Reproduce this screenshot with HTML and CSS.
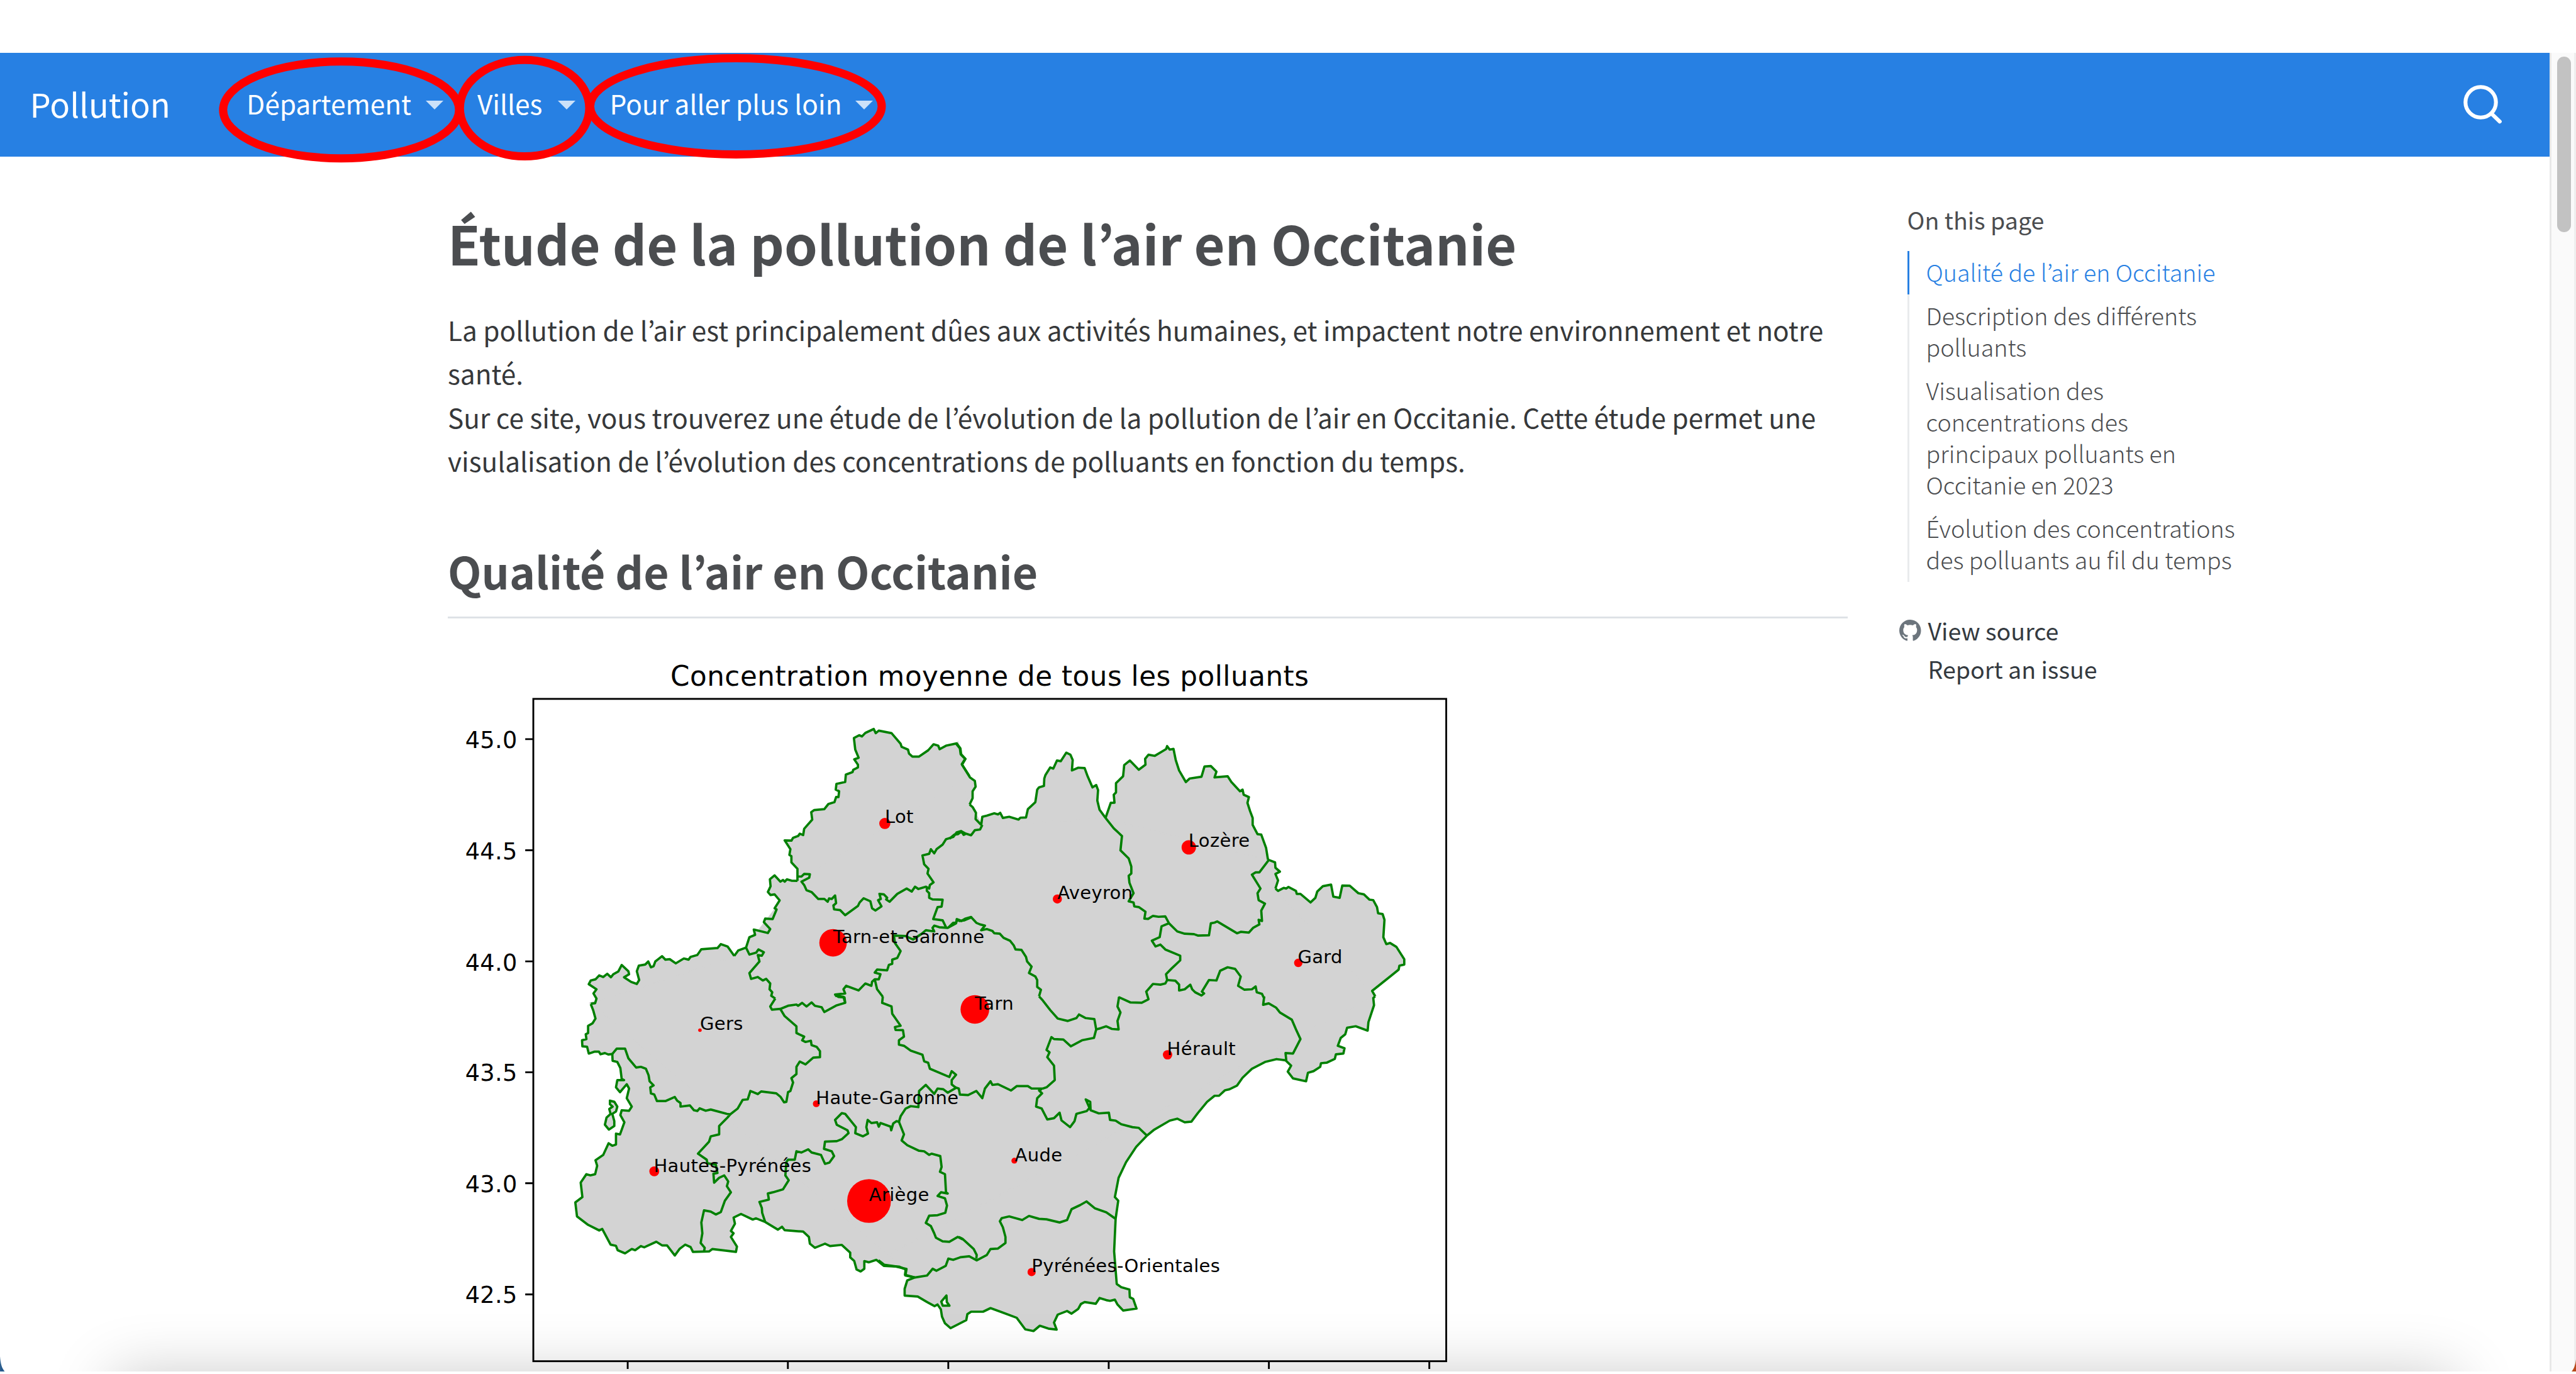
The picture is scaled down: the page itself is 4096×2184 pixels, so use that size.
FILE: index.html
```html
<!DOCTYPE html>
<html lang="fr">
<head>
<meta charset="utf-8">
<title>Pollution</title>
<link rel="stylesheet" href="styles.css">
</head>
<body>
<div class="window">
  <header class="navbar">
    <a class="brand">Pollution</a>
    <nav class="menu">
      <a class="menu-item dept">Département<i class="caret"></i></a>
      <a class="menu-item villes">Villes<i class="caret"></i></a>
      <a class="menu-item loin">Pour aller plus loin<i class="caret"></i></a>
    </nav>
    <svg class="search" viewBox="0 0 66 66"><circle cx="29.5" cy="29.5" r="26" fill="none" stroke="#fff" stroke-width="6.6"/><path d="M48 49 L62 62.5" stroke="#fff" stroke-width="6.6" stroke-linecap="round"/></svg>
  </header>
  <svg class="marks" viewBox="0 0 1600 300">
    <ellipse cx="582.6" cy="187.7" rx="201.5" ry="82.7"/>
    <ellipse cx="896" cy="184.7" rx="110.5" ry="82.3"/>
    <ellipse cx="1257" cy="181.5" rx="249" ry="82.2"/>
  </svg>
  <div class="page">
    <main class="content">
      <h1>Étude de la pollution de l’air en Occitanie</h1>
      <p>La pollution de l’air est principalement dûes aux activités humaines, et impactent notre environnement et notre<br>santé.<br>Sur ce site, vous trouverez une étude de l’évolution de la pollution de l’air en Occitanie. Cette étude permet une<br>visulalisation de l’évolution des concentrations de polluants en fonction du temps.</p>
      <h2>Qualité de l’air en Occitanie</h2>
      <svg class="map" viewBox="760 1100 1740 1246">
        <defs>
          <g id="coast">
            <g transform="translate(760 1100) scale(.574 .3954)">
              <path d="M433,1552 446,1550 450,1530 441,1508 450,1490 427,1468 433,1452 447,1447 458,1430 470,1437 482,1423 493,1438 500,1425 515,1413 525,1385 545,1412 547,1425 532,1438 553,1458 570,1467 577,1450 570,1412 576,1388 595,1383 604,1370 612,1395 620,1390 625,1370 645,1347 655,1362 668,1360 686,1378 710,1357 724,1362 730,1350 750,1342 762,1317 810,1312 820,1295 840,1305 860,1346"/>
              <path d="M895,1310 905,1265 922,1255 918,1232 960,1247 967,1230 948,1200 952,1185 974,1187 986,1145 980,1140 995,1106 980,1080 968,1083 960,1070 968,1045 966,1015 980,998 997,1025 1005,1018 1010,1025 1017,1015 1030,1021 1048,1022"/>
              <path d="M1048,1022 1048,1003 1048,970 1030,942 1030,915 1024,910 1027,885 1010,847 1030,848 1035,836 1050,828 1055,818 1065,824 1068,797 1092,757 1089,725 1098,716 1128,712 1140,690 1158,682 1163,660 1170,660 1172,635 1162,628 1164,603 1190,595 1192,563 1212,552 1214,542 1228,532 1228,520 1217,497 1230,490 1220,455 1216,405 1232,393 1240,398 1250,383 1275,366 1281,384 1290,373 1328,384 1355,430 1358,443 1377,455 1380,472 1390,485 1410,485 1437,458 1453,432 1467,438 1471,453 1490,438 1522,428 1533,450 1535,475 1548,495 1538,520 1560,570"/>
            </g>
            <g transform="translate(1500 1100) scale(.6378 .3954)">
              <path d="M207,428 218,450 220,475 232,495 223,518 245,575 258,590 260,615 252,635 252,665 244,692"/>
              <path d="M244,692 252,703 261,728 260,755 275,780"/>
              <path d="M275,780 278,745 290,740 310,730 320,735 326,728 333,750 350,745 375,757 380,749 395,748 400,712 420,682 425,628 430,618 443,612 444,580 447,565 460,532 468,537 478,502 488,505 503,468 514,477 520,500 518,545 535,533 552,535 560,570 573,618 583,608 588,630 586,675 592,715 608,750"/>
              <path d="M608,750 622,685 632,684 630,650 636,640 636,600 655,570 658,522 673,502 697,542 715,520 714,495 723,477 740,482 770,453 773,440 780,455 790,452 796,500 805,545 823,595 833,580 865,572 873,528 890,526 905,550 900,575 935,570 945,595 968,635 975,628 978,650 992,660 988,685 995,720 1002,750 1002,780 1015,820 1025,822 1038,880 1043,930"/>
              <path d="M1043,930 1062,942 1063,965 1075,982 1063,992 1070,1020 1063,1055"/>
              <path d="M1063,1055 1070,1065 1085,1052 1092,1055 1098,1048 1118,1065 1120,1078 1130,1078 1157,1115 1170,1095 1175,1068 1190,1045 1212,1038 1218,1090 1235,1095 1242,1042 1262,1043 1285,1075 1300,1080 1315,1103 1325,1105 1335,1135 1338,1162 1350,1165 1355,1190 1352,1265 1360,1295 1370,1290 1387,1307 1408,1360 1408,1383 1395,1388 1393,1405 1370,1435 1322,1497 1330,1520"/>
            </g>
            <g transform="translate(1500 1700) scale(.6378 .412)">
              <path d="M1330,3 1325,10 1327,40 1312,110 1310,145 1278,127 1255,133 1250,160 1238,175 1230,208 1248,218 1245,240 1225,243 1222,262 1200,278 1185,280 1183,295 1165,313 1150,320 1145,355 1110,343 1096,315 1105,290 1090,268 1066,263 1035,275 1000,303 975,340 960,373 940,388 928,392 912,415 900,415 880,440 855,487 838,522 820,525 800,510 780,518 737,557 719,580 690,627 663,690 643,755 633,835 642,850 635,925 631,1060 638,1195 650,1208 672,1218 673,1250 682,1257 691,1297 655,1305 640,1280 633,1260 620,1265 610,1262 592,1253 582,1277 552,1270 542,1278 535,1298 517,1318 505,1307 480,1322 470,1355 477,1384 455,1380 432,1368 415,1390 393,1383 370,1335 330,1312 300,1295 280,1310 248,1310 238,1320 235,1345 193,1378 178,1358 170,1330 167,1300 158,1280 150,1287 130,1270 105,1247 70,1243 70,1215 77,1180 97,1168 72,1160 75,1133 45,1122 15,1115 0,1097"/>
            </g>
            <g transform="translate(760 1700) scale(.574 .412)">
              <path d="M433,35 440,60 447,95 438,115 425,125 425,155 418,160 420,180 407,185 408,210 422,212 427,240 445,232 457,232 462,243 475,238 485,244 497,242 498,270 512,275 521,300 525,345 532,350 512,350 508,380 520,400 540,367 547,385 540,425 555,460 547,477 525,475 521,495 533,525 520,575 508,572 508,617 497,622 486,612 470,660 447,682 452,705 446,740 432,745 420,740 403,775 408,835 387,857 392,915 425,950 458,973 467,967 492,1032 508,1037 513,1055 535,1068 555,1050 565,1055 582,1038 592,1043 628,1020 645,1035 660,1035 683,1077 697,1050 714,1032 730,1042 737,1062 785,1060 795,1050 865,1062 868,1040 850,1000 858,985 850,975 862,945 858,920 880,905 915,928 925,923 952,938 990,970 1002,958 1010,972 1065,978 1082,1000 1085,1028 1100,1045 1130,1028 1145,1038 1180,1033 1205,1065 1205,1085 1217,1100 1224,1135 1236,1143 1247,1132 1247,1100 1260,1105 1283,1095 1305,1120 1350,1123 1370,1135 1368,1157 1397,1168"/>
            </g>
          </g>
        </defs>
        <g class="land">
          <path class="inland" d="M1009,1713 1253.6,1632.2 1273.7,1618 1361.6,1504 1635,1269 1655.6,1373.6 1675.4,1408.4 1887.8,1396.6 2165.2,1467.7 2178,1517 2348,1700 1500,2152z"/>
          <use href="#coast"/>
        </g>
        <g class="border">
          <use href="#coast"/>
          <g transform="translate(760 1100) scale(.574 .3954)">
            <path d="M860,1346 872,1322 895,1310"/>
            <path d="M1048,1003 1060,1003 1068,992 1085,993 1083,1008 1060,1025 1068,1040 1075,1062 1090,1070 1110,1100 1128,1100 1138,1112 1142,1098 1150,1100 1160,1085 1163,1118 1155,1128 1157,1145 1175,1148 1190,1170 1228,1130 1233,1115 1245,1097 1265,1110 1270,1140 1280,1150 1298,1132 1288,1105 1296,1100 1292,1078 1305,1080 1315,1095 1312,1102 1322,1112 1345,1078 1373,1055 1388,1068 1398,1047 1408,1057 1430,1047 1440,1055 1442,1040 1453,1028 1435,990 1438,970 1425,950 1420,912 1440,905 1445,885 1455,903 1462,885 1480,865 1490,842 1512,832 1522,812 1535,807 1548,817"/>
            <path d="M1433,1047 1433,1065 1440,1075 1440,1095 1450,1102 1480,1103 1477,1133 1465,1135 1452,1187 1480,1192 1490,1222"/>
            <path d="M1568,1178 1545,1192 1530,1195 1522,1187 1520,1205 1495,1225 1470,1222 1455,1215 1450,1225 1455,1240 1430,1235 1418,1250 1392,1275 1370,1260 1335,1258 1338,1290 1355,1325 1345,1355 1330,1362 1330,1380 1320,1385 1315,1408 1285,1405 1278,1418 1295,1425 1290,1447 1278,1447 1270,1458 1268,1475 1250,1465 1230,1495 1193,1475 1185,1490 1190,1508 1160,1513 1170,1523 1188,1525 1190,1548"/>
            <path d="M895,1310 905,1340 925,1332 932,1318 948,1330 942,1345 930,1342 935,1370 905,1420 910,1445 930,1437 945,1452 955,1445 967,1465 965,1490 973,1503 970,1518 982,1530"/>
            <path d="M1278,1447 1285,1490 1302,1522"/>
          </g>
          <g transform="translate(1500 1100) scale(.6378 .3954)">
            <path d="M190,840 203,822 213,820 222,808 228,823 235,818 248,825 258,803 272,800 278,780"/>
            <path d="M188,1222 200,1203 207,1203 212,1188 222,1195 232,1185 248,1178 262,1203 272,1210 285,1215 275,1235 290,1230 305,1238 310,1248 325,1250 335,1268 352,1280 362,1300 367,1318 383,1320 395,1350 398,1370 410,1392 403,1420 420,1435 425,1450 425,1480 435,1492 430,1520"/>
            <path d="M642,1528 645,1525 675,1547 705,1548 723,1533 717,1500 735,1467 755,1470 768,1465 773,1450 795,1453 805,1470 805,1495 820,1490 835,1470 840,1490 848,1503 865,1517 872,1508 866,1500 885,1450 905,1452 915,1410 935,1395 955,1402 970,1435 963,1475 980,1492 1000,1490 1010,1478 1013,1503 1027,1510 1033,1530"/>
            <path d="M773,1450 770,1425 785,1400 808,1365 808,1345 768,1318 755,1297 742,1305 732,1280 753,1265 758,1218 778,1205"/>
            <path d="M608,750 630,795 652,828 648,890 670,925 677,960 677,990 670,1000 672,1030 683,1075 670,1110 683,1115 685,1132 697,1135 715,1155 712,1185 722,1186 735,1173 750,1177 768,1175 778,1205 800,1240 820,1250 845,1252 855,1258 885,1257 890,1205 900,1202 907,1197 960,1248 970,1242 992,1245 1003,1225 1020,1210 1018,1190 1027,1195 1025,1150 1035,1120 1018,1105 1015,1075 1023,1055 1000,995 1010,985 1020,985 1045,932"/>
          </g>
          <g transform="translate(760 1700) scale(.574 .412)">
            <path d="M1160,0 1185,5 1190,30 1165,40 1128,68 1120,48 1100,42 1090,28 1075,45 1062,30 1050,42 1045,37 1020,42 997,55 972,58 967,45 982,12"/>
            <path d="M1302,4 1300,30 1328,45 1330,75 1340,95 1355,125 1338,130 1340,142 1362,143 1365,170 1350,185 1350,203 1365,208 1385,228 1420,245 1425,272 1437,278 1442,303 1500,337 1507,313 1520,328 1507,350 1507,368 1520,382"/>
            <path d="M997,55 1010,85 1045,127 1045,155 1068,170 1062,185 1072,192 1088,187 1090,205 1105,212 1115,230 1115,255 1095,257 1072,285 1055,273 1045,295 1045,325 1030,342 1035,360 1027,395 1020,400 1015,440 1008,442 998,420 985,405 940,397 930,408 908,395 900,430 885,432 870,468 848,492"/>
            <path d="M497,242 510,220 535,220 545,260 568,298 582,295 597,303 605,330 608,355 620,372 610,380 612,405 622,410 630,437 655,437 683,420 690,435 700,445 700,460 728,455 740,475 750,478 757,467 775,477 790,472 838,490 848,492 840,505 815,540 815,575 790,583 785,605 752,655 778,680 780,695 805,700 810,735 798,738 800,775 815,755 830,745 842,770 838,790 850,815 832,850 820,897 805,907 790,895 770,890 762,940 765,985 760,1025 772,1045 770,1060"/>
            <path d="M952,938 943,900 942,880 935,855 963,845 960,820 975,815 1005,803 1022,765 1012,745 1015,690 1020,680 1040,680 1045,645 1060,650 1080,637 1090,650 1118,660 1130,697 1143,692 1157,665 1150,645 1127,635 1130,605 1165,603 1180,595 1200,570 1197,558 1165,535 1160,515 1180,487 1190,490 1222,545 1220,570 1243,583 1258,572 1253,545 1257,515 1268,528 1285,525 1290,543 1295,528 1325,543 1327,558 1333,530 1343,520 1350,523 1355,500 1370,468 1385,458 1408,462 1410,395 1430,370 1455,407 1465,385 1482,388 1495,402 1520,382"/>
            <path d="M1350,523 1365,575 1358,600 1375,620 1410,643 1425,645 1440,660 1447,655 1473,665 1477,710 1472,730 1487,740 1490,815 1495,820 1475,815 1465,830 1487,840 1493,870 1488,900 1465,910 1440,912 1430,942 1445,955 1455,985 1460,1003 1480,1018 1500,1020 1525,1000 1540,1010"/>
            <path class="islet" d="M490,435 503,440 512,460 508,480 497,490 503,520 503,540 487,555 475,535 480,505 492,490 488,470 498,460 490,450z"/>
          </g>
          <g transform="translate(1500 1700) scale(.6378 .412)">
            <path d="M215,1000 225,1008 255,1050 263,1075 262,1090"/>
            <path d="M97,1168 130,1160 145,1132 155,1140 180,1120 187,1090 200,1095 220,1084 243,1080 263,1097 290,1075 300,1050 320,1048 340,1025 340,1000 333,960 325,935 330,922 350,915 385,930 403,913 430,925 450,927 485,940 505,930 517,885 540,868 557,853 580,882 610,898 635,925"/>
            <path class="lake" d="M182,1243 183,1270 190,1285 172,1285 168,1268z"/>
            <path d="M205,380 215,385 218,410 240,412 262,395 278,425 285,385 300,355 305,370 320,367 355,393 370,375 400,375 410,385 440,385 450,380 472,350 470,290 452,255 458,235 450,225 463,172 470,180 495,182 515,210 545,185 577,175 583,140 578,97 555,93 537,78 530,93 507,105 480,95 460,60 440,20 430,3"/>
            <path d="M437,387 430,393 438,405 425,425 422,460 437,468 452,513 470,508 485,485 490,517 513,545 525,520 530,490 558,478 565,465 555,430 567,440 568,475 590,488 617,485 620,515 635,518 650,533 680,545 697,548 719,580"/>
            <path d="M583,140 595,135 610,127 625,138 643,140 640,105 648,70 640,45 644,8"/>
            <path d="M1033,3 1030,38 1045,32 1065,50 1075,70 1107,100 1118,140 1130,180 1110,240 1090,238 1092,268"/>
          </g>
        </g>
        <g class="dots">
          <circle cx="1510.8" cy="1406" r="9.5"/><circle cx="1422.4" cy="1609.7" r="23.5"/><circle cx="1483.8" cy="2050.6" r="37.4"/>
          <circle cx="1117" cy="2000" r="8.5"/><circle cx="1195" cy="1759" r="3"/><circle cx="1393.7" cy="1884.6" r="5.8"/>
          <circle cx="1664.6" cy="1723.5" r="24.5"/><circle cx="1993.7" cy="1801" r="8"/><circle cx="1732" cy="1981.8" r="5"/>
          <circle cx="1761.5" cy="2172" r="7"/><circle cx="1805.5" cy="1535" r="7.8"/><circle cx="2030" cy="1446.8" r="12.3"/><circle cx="2217" cy="1644" r="7.2"/>
        </g>
        <g class="labels">
          <text x="1510.8" y="1405">Lot</text><text x="1422.4" y="1610">Tarn-et-Garonne</text><text x="1483.8" y="2051">Ariège</text>
          <text x="1116" y="2001">Hautes-Pyrénées</text><text x="1195" y="1758">Gers</text><text x="1393" y="1885">Haute-Garonne</text>
          <text x="1664.6" y="1724">Tarn</text><text x="1992.7" y="1801.5">Hérault</text><text x="1732.7" y="1982.5">Aude</text>
          <text x="1761.5" y="2172">Pyrénées-Orientales</text><text x="1805.5" y="1535.5">Aveyron</text><text x="2029.5" y="1446">Lozère</text><text x="2216" y="1644.5">Gard</text>
        </g>
        <g class="axes">
          <rect x="910.4" y="1193.3" width="1559.3" height="1130.9"/>
          <path d="M896.6,1262H910M896.6,1451.7H910M896.6,1641.5H910M896.6,1830.8H910M896.6,2020.3H910M896.6,2210.2H910M1071.6,2324V2337.5M1345.2,2324V2337.5M1619.2,2324V2337.5M1893.2,2324V2337.5M2166.8,2324V2337.5M2440.8,2324V2337.5"/>
        </g>
        <g class="ticks">
          <text x="883" y="1277">45.0</text><text x="883" y="1467">44.5</text><text x="883" y="1657">44.0</text>
          <text x="883" y="1846">43.5</text><text x="883" y="2036">43.0</text><text x="883" y="2225">42.5</text>
        </g>
        <text class="plot-title" x="1690" y="1170.8">Concentration moyenne de tous les polluants</text>
      </svg>
    </main>
    <aside class="toc">
      <div class="toc-title">On this page</div>
      <ul>
        <li class="active">Qualité de l’air en Occitanie</li>
        <li>Description des différents<br>polluants</li>
        <li>Visualisation des<br>concentrations des<br>principaux polluants en<br>Occitanie en 2023</li>
        <li>Évolution des concentrations<br>des polluants au fil du temps</li>
      </ul>
      <div class="actions">
        <a><svg class="gh" viewBox="0 0 16 16"><path d="M8 0C3.58 0 0 3.58 0 8c0 3.54 2.29 6.53 5.47 7.59.4.07.55-.17.55-.38 0-.19-.01-.82-.01-1.49-2.01.37-2.53-.49-2.69-.94-.09-.23-.48-.94-.82-1.13-.28-.15-.68-.52-.01-.53.63-.01 1.08.58 1.23.82.72 1.21 1.87.87 2.33.66.07-.52.28-.87.51-1.07-1.78-.2-3.64-.89-3.64-3.95 0-.87.31-1.59.82-2.15-.08-.2-.36-1.02.08-2.12 0 0 .67-.21 2.2.82.64-.18 1.32-.27 2-.27s1.36.09 2 .27c1.53-1.04 2.2-.82 2.2-.82.44 1.1.16 1.92.08 2.12.51.56.82 1.27.82 2.15 0 3.07-1.87 3.75-3.65 3.95.29.25.54.73.54 1.48 0 1.07-.01 1.93-.01 2.2 0 .21.15.46.55.38A8.01 8.01 0 0 0 16 8c0-4.42-3.58-8-8-8"/></svg>View source</a>
        <a>Report an issue</a>
      </div>
    </aside>
  </div>
  <div class="scrollbar"><div class="thumb"></div></div>
  <div class="shade"><div class="dock"></div></div>
  <svg class="corner left" viewBox="0 0 8 26"><path d="M0 0C1 13 3 20 8 26H0z" fill="#265a8c"/></svg>
  <svg class="corner right" viewBox="0 0 8 26"><path d="M8 0C7 13 5 20 0 26H8z" fill="#b8491b"/></svg>
  <div class="edge"></div>
</div>
</body>
</html>
```
FILE: styles.css
```css
* { box-sizing: border-box; }
body { margin: 0; background: #fff; font-family: "Noto Sans CJK KR", "Noto Sans", sans-serif; color: #343a40; }
.window { position: relative; width: 4096px; height: 2184px; padding-top: 84px; overflow: hidden; }

.navbar { display: flex; align-items: center; width: 4054px; height: 165.4px; padding: 0 76px 5.5px 47.5px; background: #2780e3; color: #fff; white-space: nowrap; }
.brand { width: 344.5px; font-size: 52.5px; }
.menu { display: flex; flex: 1; font-size: 42.4px; }
.menu-item { display: flex; align-items: center; justify-content: space-between; }
.dept { width: 312.5px; margin-right: 54.5px; }
.villes { width: 155.5px; margin-right: 55px; }
.loin { width: 418px; }
.caret { border: 14px solid transparent; border-top-color: #cce1f9; border-bottom: 0; margin-top: 7px; }
.search { width: 61.5px; height: 61.5px; margin-top: 4px; }
.marks { position: absolute; left: 0; top: 0; width: 1489.5px; height: 279.3px; fill: none; stroke: #f00; stroke-width: 14; }

.page { display: flex; padding-left: 712px; }
.content { width: 2226px; padding-top: 85.8px; white-space: nowrap; }
h1 { margin: 0; font-size: 84.6px; line-height: 100px; color: #4b4d50; }
p { margin: 53.6px 0 96.9px; font-size: 42.35px; line-height: 69.5px; color: #36383a; }
h2 { margin: 0; padding-bottom: 30px; border-bottom: 3px solid #dee2e6; font-size: 69.6px; line-height: 86px; color: #4b4d50; }
.map { display: block; width: 1619.8px; height: 1160px; margin: 41.3px 0 0 -4.5px; font-family: "DejaVu Sans", sans-serif; }
.land { fill: #d3d3d3; }
.inland { stroke: #d3d3d3; stroke-width: 4; }
.border { fill: none; stroke: #008000; stroke-linejoin: round; }
.border path, #coast path { vector-effect: non-scaling-stroke; stroke-width: 3.7px; }
.border .islet { fill: #d3d3d3; }
.border .lake { fill: #fafafa; }
.dots { fill: #f00; }
.labels { font-size: 31.2px; letter-spacing: .35px; }
.axes { fill: none; stroke: #000; stroke-width: 3.1; }
.ticks { font-size: 39.4px; text-anchor: end; letter-spacing: .3px; }
.plot-title { font-size: 46.9px; text-anchor: middle; letter-spacing: .55px; }

.toc { margin-left: 94.5px; padding-top: 74.5px; font-size: 37.6px; line-height: 50px; white-space: nowrap; }
.toc-title { color: #4b4d50; }
ul { list-style: none; margin: 25.5px 0 45.7px; padding: 0; font-weight: 300; color: #4b4d50; }
li { padding: 7.5px 0 11.4px 27px; border-left: 3px solid #e9ebed; }
li.active { border-left-color: #2780e3; color: #2780e3; }
.actions a { display: flex; align-items: center; padding-left: 33px; line-height: 61.4px; color: #343a40; }
.gh { width: 34.5px; height: 34.5px; margin: 1px 11px 0 -45.5px; fill: #6c757d; }

.scrollbar { position: absolute; left: 4054px; top: 84px; width: 42px; height: 2096px; padding: 6px 0 0 8.5px; background: #fafafa; border-left: 3px solid #e8e8e8; border-right: 3px solid #eee; }
.thumb { width: 22.4px; height: 278.5px; border-radius: 12px; background: #c2c2c2; }
.shade { position: absolute; left: 0; bottom: 4px; width: 4054px; height: 260px; overflow: hidden; }
.dock { position: absolute; left: 180px; right: 150px; top: 268px; height: 300px; box-shadow: 0 0 100px rgba(0,0,0,.23); }
.corner { position: absolute; bottom: 4px; width: 7.5px; height: 24px; }
.left { left: 0; }
.right { right: 0; }
.edge { position: absolute; left: 0; bottom: 0; width: 100%; height: 4px; background: #fff; }
```
